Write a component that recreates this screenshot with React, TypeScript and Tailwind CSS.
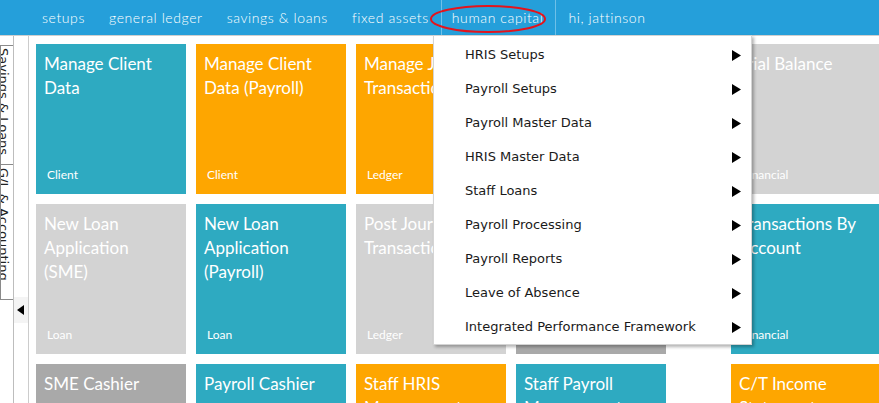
import React from "react";

const TEAL = "bg-[#2eaac1]";
const ORANGE = "bg-[#fea600]";
const LIGHT = "bg-[#d3d3d3]";
const DARK = "bg-[#a9a9a9]";

type T = { title: string; sub?: string; color: string };

const cols: T[][] = [
  [
    { title: "Manage Client Data", sub: "Client", color: TEAL },
    { title: "New Loan Application (SME)", sub: "Loan", color: LIGHT },
    { title: "SME Cashier", sub: "Loan", color: DARK },
  ],
  [
    { title: "Manage Client Data (Payroll)", sub: "Client", color: ORANGE },
    { title: "New Loan Application (Payroll)", sub: "Loan", color: TEAL },
    { title: "Payroll Cashier", sub: "Loan", color: TEAL },
  ],
  [
    { title: "Manage Journal Transaction", sub: "Ledger", color: ORANGE },
    { title: "Post Journal Transaction", sub: "Ledger", color: LIGHT },
    { title: "Staff HRIS Management", sub: "HRIS", color: ORANGE },
  ],
  [
    { title: "Approve Journal Transaction", sub: "Ledger", color: TEAL },
    { title: "Journal Reports", sub: "Ledger", color: DARK },
    { title: "Staff Payroll Management", sub: "Payroll", color: TEAL },
  ],
];

const col5: T[] = [
  { title: "Trial Balance", sub: "Financial", color: LIGHT },
  { title: "Transactions By Account", sub: "Financial", color: TEAL },
  { title: "C/T Income Statement", sub: "Financial", color: ORANGE },
];

const menu = [
  "HRIS Setups",
  "Payroll Setups",
  "Payroll Master Data",
  "HRIS Master Data",
  "Staff Loans",
  "Payroll Processing",
  "Payroll Reports",
  "Leave of Absence",
  "Integrated Performance Framework",
];

const nav = ["setups", "general ledger", "savings & loans", "fixed assets", "human capital", "hi, jattinson"];

function Tile({ t }: { t: T }) {
  return (
    <div className={`${t.color} flex h-[150px] w-[150px] shrink-0 flex-col justify-between text-white`}>
      <div className="pl-[8px] pr-[14px] pt-[8px] text-[17px] leading-[24px]">{t.title}</div>
      <div className="pb-[11px] pl-[11px] text-[12px] leading-[16px]">{t.sub}</div>
    </div>
  );
}

export default function App() {
  return (
    <div
      className="relative h-[403px] w-[879px] overflow-hidden bg-white"
      style={{ fontFamily: "Lato, 'Open Sans', sans-serif" }}
    >
      <header className="flex h-[35px] bg-[#259fda] pl-[30px] text-[14px] font-light tracking-[0.6px] text-white">
        {nav.map((n) => (
          <div
            key={n}
            className={
              n === "human capital"
                ? "flex items-center border-x border-[#6ec0e8] pl-[10px] pr-[12px]"
                : "flex items-center px-[12px]"
            }
          >
            {n}
          </div>
        ))}
      </header>
      <div className="h-px bg-[#cfcfcf]" />
      <div className="flex">
        {/* vertical tabs */}
        <div className="h-[368px] w-[14px] shrink-0 overflow-hidden border-r border-[#bdbdbd] pt-[9px]">
          <div
            className="h-[120px] w-[13px] overflow-hidden border-y border-l border-[#8a8a8a] text-[13px] leading-[13px] text-[#222]"
            style={{ fontFamily: "'DejaVu Sans', sans-serif" }}
          >
            <div className="ml-[-4px] pt-[2px] [writing-mode:vertical-rl]">Savings &amp; Loans</div>
          </div>
          <div
            className="h-[135px] w-[13px] overflow-hidden border-b border-l border-[#8a8a8a] text-[13px] leading-[13px] text-[#222]"
            style={{ fontFamily: "'DejaVu Sans', sans-serif" }}
          >
            <div className="ml-[-4px] pt-[3px] [writing-mode:vertical-rl]">G/L &amp; Accounting</div>
          </div>
        </div>
        <div className="w-[14px] shrink-0 pt-[261px]">
          <div className="flex h-[26px] w-[14px] items-center justify-center bg-[#f4f4f4]">
            <svg width="8" height="10" viewBox="0 0 8 10">
              <polygon points="7,0 7,10 0,5" fill="#000" />
            </svg>
          </div>
        </div>
        <div className="w-px shrink-0 bg-[#cccccc]" />
        <div className="flex pl-[7px] pt-[8px]">
          <div className="flex gap-[10px]">
            {cols.map((c, i) => (
              <div key={i} className="flex flex-col gap-[10px]">
                {c.map((t) => (
                  <Tile key={t.title} t={t} />
                ))}
              </div>
            ))}
          </div>
          <div className="ml-[65px] flex flex-col gap-[10px]">
            {col5.map((t) => (
              <Tile key={t.title} t={t} />
            ))}
          </div>
        </div>
      </div>

      {/* dropdown menu */}
      <div
        className="absolute left-[433px] top-[35px] w-[319px] border border-[#d4d4d4] bg-white pt-[2px] shadow-[2px_2px_3px_rgba(0,0,0,0.3)]"
        style={{ fontFamily: "'DejaVu Sans', sans-serif" }}
      >
        {menu.map((m) => (
          <div key={m} className="flex h-[34px] items-center justify-between pl-[31px] pr-[10px] text-[13px] text-[#1a1a1a]">
            <span>{m}</span>
            <svg width="9" height="11" viewBox="0 0 9 11">
              <polygon points="0,0 9,5.5 0,11" fill="#000" />
            </svg>
          </div>
        ))}
      </div>

      {/* red annotation ellipse */}
      <svg className="absolute left-[428px] top-[3px]" width="122" height="32" viewBox="0 0 122 32">
        <ellipse cx="60" cy="16" rx="57" ry="13" fill="none" stroke="#e3141c" strokeWidth="2" />
      </svg>
    </div>
  );
}
